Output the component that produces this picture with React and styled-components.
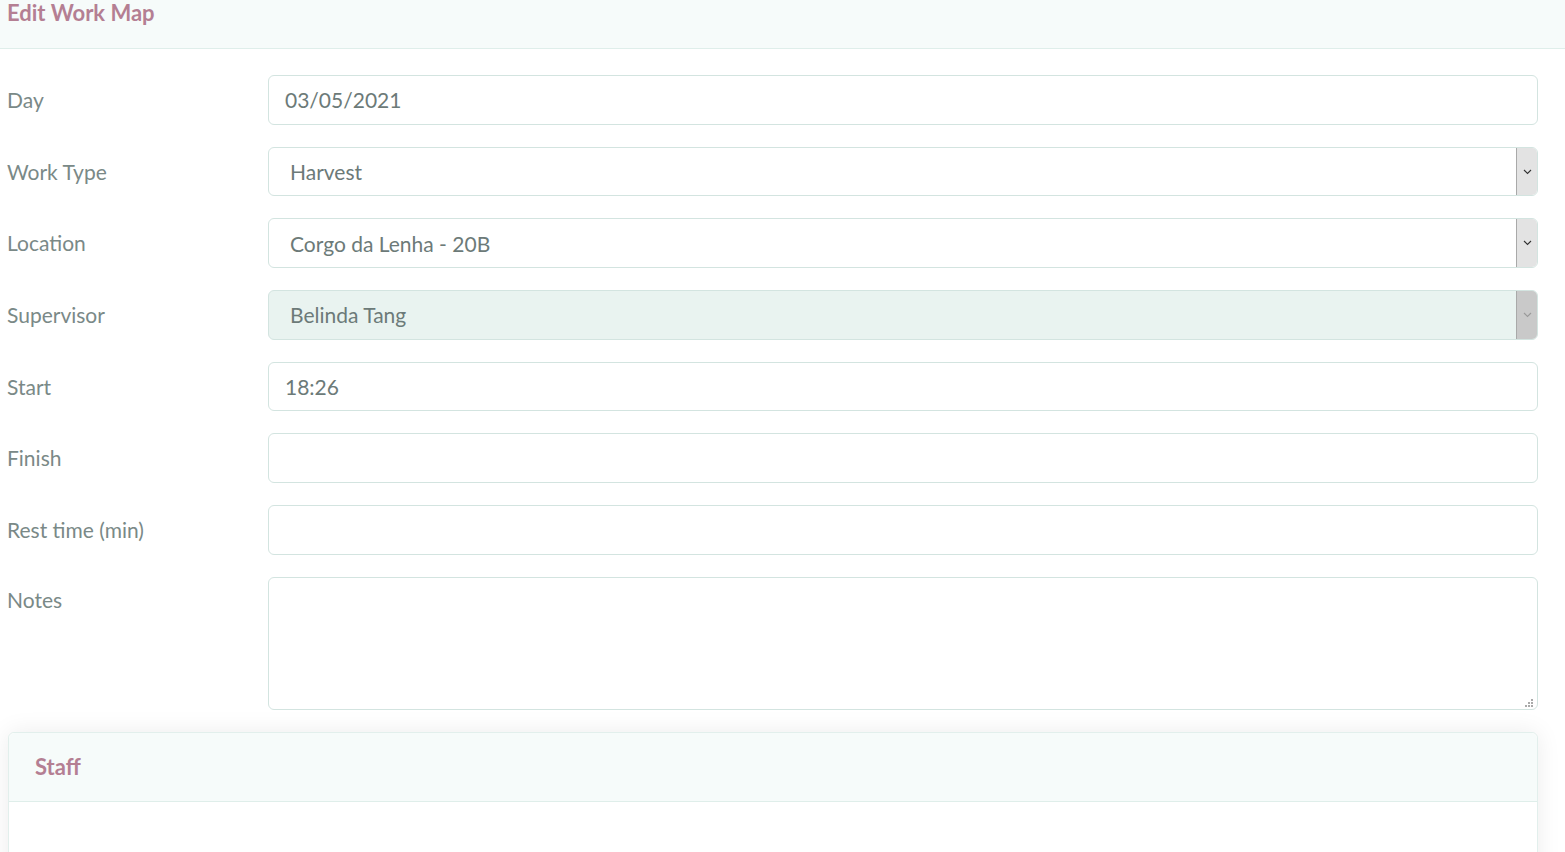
import React from "react";
import styled, { createGlobalStyle } from "styled-components";

const Global = createGlobalStyle`
  html, body {
    margin: 0;
    background: #fff;
    font-family: Lato, "Open Sans", sans-serif;
    color: #6f7d7b;
  }
  * { box-sizing: border-box; }
`;

const fields = [
  { label: "Day", kind: "input", value: "03/05/2021" },
  { label: "Work Type", kind: "select", value: "Harvest" },
  { label: "Location", kind: "select", value: "Corgo da Lenha - 20B" },
  { label: "Supervisor", kind: "select", value: "Belinda Tang", disabled: true },
  { label: "Start", kind: "input", value: "18:26" },
  { label: "Finish", kind: "input", value: "" },
  { label: "Rest time (min)", kind: "input", value: "" },
];

const App = () => {
  return (
    <>
      <Global />
      <Page>
        <Header>
          <Title>Edit Work Map</Title>
        </Header>

        <Form>
          {fields.map((f) => (
            <Row key={f.label}>
              <Label>{f.label}</Label>
              {f.kind === "input" ? (
                <Input>{f.value}</Input>
              ) : (
                <Select disabled={f.disabled}>
                  <SelectText>{f.value}</SelectText>
                  <Arrow disabled={f.disabled}>
                    <svg width="9" height="6" viewBox="0 0 9 6">
                      <path d="M1 1l3.5 3.5L8 1" fill="none" stroke="currentColor" strokeWidth="1.1" />
                    </svg>
                  </Arrow>
                </Select>
              )}
            </Row>
          ))}
          <Row top>
            <Label top>Notes</Label>
            <TextArea>
              <Grip>
                <svg width="10" height="10" viewBox="0 0 10 10" fill="#aaa">
                  <rect x="7" y="1" width="2" height="2" />
                  <rect x="4" y="4" width="2" height="2" />
                  <rect x="7" y="4" width="2" height="2" />
                  <rect x="1" y="7" width="2" height="2" />
                  <rect x="4" y="7" width="2" height="2" />
                  <rect x="7" y="7" width="2" height="2" />
                </svg>
              </Grip>
            </TextArea>
          </Row>
        </Form>

        <Card>
          <CardHeader>
            <CardTitle>Staff</CardTitle>
          </CardHeader>
          <CardBody />
        </Card>
      </Page>
    </>
  );
};

export default App;

const Page = styled.div`
  width: 1565px;
  height: 852px;
  overflow: hidden;
`;

const Header = styled.div`
  height: 49px;
  background: #f6fbfa;
  border-bottom: 1px solid #dfeeea;
  padding: 1px 7px 0;
`;

const Title = styled.h1`
  margin: 0;
  font-size: 22px;
  line-height: 24px;
  font-weight: 700;
  color: #b47f93;
`;

const Form = styled.div`
  display: flex;
  flex-direction: column;
  gap: 22px;
  padding: 26px 27px 22px 7px;
`;

const Row = styled.div`
  display: grid;
  grid-template-columns: 261px 1fr;
  align-items: ${(p) => (p.top ? "start" : "center")};
`;

const Label = styled.div`
  font-size: 21px;
  line-height: 24px;
  color: #7a8987;
  padding-top: ${(p) => (p.top ? "11px" : "0")};
`;

const Input = styled.div`
  height: 49.7px;
  border: 1px solid #d3e4e0;
  border-radius: 6px;
  padding: 0 16px;
  display: flex;
  align-items: center;
  font-size: 21px;
  color: #6c7a78;
  background: #fff;
`;

const Select = styled.div`
  height: 49.7px;
  border: 1px solid #d3e4e0;
  border-radius: 6px;
  display: flex;
  align-items: stretch;
  background: ${(p) => (p.disabled ? "#e9f3f0" : "#fff")};
  overflow: hidden;
`;

const SelectText = styled.div`
  flex: 1;
  display: flex;
  align-items: center;
  padding-left: 21px;
  font-size: 21px;
  color: #6c7a78;
`;

const Arrow = styled.div`
  width: 21px;
  display: flex;
  align-items: center;
  justify-content: center;
  background: ${(p) => (p.disabled ? "#c9c9c9" : "#e3e3e3")};
  border-left: 1px solid #a9a9a9;
  color: ${(p) => (p.disabled ? "#9a9a9a" : "#333")};
`;

const TextArea = styled.div`
  position: relative;
  height: 133px;
  border: 1px solid #d3e4e0;
  border-radius: 6px;
  background: #fff;
`;

const Grip = styled.div`
  position: absolute;
  right: 3px;
  bottom: 1px;
  line-height: 0;
`;

const Card = styled.div`
  margin: 0 27px 0 8px;
  border: 1px solid #e2efec;
  border-radius: 6px;
  box-shadow: 0 0 24px rgba(0, 0, 0, 0.08);
  background: #fff;
`;

const CardHeader = styled.div`
  height: 69px;
  background: #f6fbfa;
  border-bottom: 1px solid #dfeeea;
  border-radius: 6px 6px 0 0;
  display: flex;
  align-items: center;
  padding: 0 26px;
`;

const CardTitle = styled.h2`
  margin: 0;
  font-size: 22px;
  font-weight: 700;
  color: #b47f93;
`;

const CardBody = styled.div`
  height: 120px;
`;
